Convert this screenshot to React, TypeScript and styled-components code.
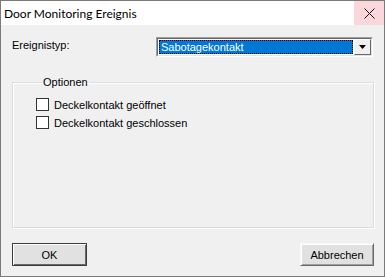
import React from "react";
import styled, { createGlobalStyle } from "styled-components";

const Global = createGlobalStyle`
  html, body { margin: 0; padding: 0; background: #ffffff; }
  * { box-sizing: border-box; }
`;

const Window = styled.div`
  width: 385px;
  height: 277px;
  border: 1px solid #7a7a7a;
  display: flex;
  flex-direction: column;
  background: #f0f0f0;
  font-family: "Liberation Sans", Arial, sans-serif;
  font-size: 11px;
  color: #000;
`;

const TitleBar = styled.div`
  height: 24px;
  background: #ffffff;
  display: flex;
  align-items: stretch;
`;

const Title = styled.div`
  flex: 1;
  padding-left: 3px;
  display: flex;
  align-items: center;
  font-family: Lato, "Noto Sans", sans-serif;
  font-size: 12px;
  color: #000;
`;

const CloseButton = styled.div`
  width: 30px;
  background: #fad7da;
  display: flex;
  align-items: center;
  justify-content: center;
`;

const Client = styled.div`
  flex: 1;
  display: flex;
  flex-direction: column;
  padding: 12px 10px 0 11px;
`;

const FieldRow = styled.div`
  display: flex;
  align-items: flex-start;
  height: 20px;
`;

const FieldLabel = styled.div`
  width: 144px;
  padding-top: 2px;
  line-height: 13px;
`;

const Combo = styled.div`
  width: 217px;
  height: 20px;
  display: flex;
  border-top: 1px solid #a0a0a0;
  border-left: 1px solid #a0a0a0;
  border-right: 1px solid #ffffff;
  border-bottom: 1px solid #ffffff;
`;

const ComboInner = styled.div`
  flex: 1;
  display: flex;
  background: #ffffff;
  border-top: 1px solid #696969;
  border-left: 1px solid #696969;
  border-right: 1px solid #e3e3e3;
  border-bottom: 1px solid #e3e3e3;
  padding: 1px;
`;

const ComboValue = styled.div`
  flex: 1;
  background: #0078d7;
  color: #ffffff;
  outline: 1px dotted #000;
  outline-offset: -1px;
  border: 1px dotted #ff9d2e;
  padding-left: 1px;
  line-height: 12px;
`;

const DropButton = styled.div`
  width: 17px;
  display: flex;
  align-items: center;
  justify-content: center;
  background: #f0f0f0;
  border-top: 1px solid #ffffff;
  border-left: 1px solid #ffffff;
  border-right: 1px solid #696969;
  border-bottom: 1px solid #696969;
  margin: -1px -1px -1px 1px;
`;

const Group = styled.fieldset`
  margin: 19px 0 0 0;
  padding: 9px 0 0 23px;
  height: 152px;
  border: 1px solid #dcdcdc;
  box-shadow: inset 1px 1px 0 #ffffff, 1px 1px 0 #ffffff;
  display: flex;
  flex-direction: column;
  gap: 5px;
`;

const Legend = styled.legend`
  margin-left: 6px;
  padding: 0 1px;
  line-height: 13px;
`;

const CheckRow = styled.label`
  display: flex;
  align-items: center;
  height: 13px;
  gap: 5px;
`;

const CheckBox = styled.span`
  width: 13px;
  height: 13px;
  background: #ffffff;
  border: 1px solid #333333;
`;

const ButtonRow = styled.div`
  margin-top: 15px;
  display: flex;
  justify-content: space-between;
`;

const Button = styled.div<{ $default?: boolean; $w: number }>`
  width: ${(p) => p.$w}px;
  height: 23px;
  display: flex;
  align-items: center;
  justify-content: center;
  background: #e1e1e1;
  border: 1px solid ${(p) => (p.$default ? "#3c3c3c" : "#adadad")};
  box-shadow: ${(p) =>
    p.$default
      ? "inset 1px 1px 0 #ffffff, inset -1px -1px 0 #696969"
      : "inset 1px 1px 0 #ffffff, inset -1px -1px 0 #a0a0a0"};
  border-color: ${(p) => (p.$default ? "#3c3c3c" : "#f8f8f8 #696969 #696969 #f8f8f8")};
`;

export default function App() {
  return (
    <>
      <Global />
      <Window>
        <TitleBar>
          <Title>Door Monitoring Ereignis</Title>
          <CloseButton>
            <svg width="11" height="11" viewBox="0 0 11 11">
              <path d="M0.5 0.5 L10.5 10.5 M10.5 0.5 L0.5 10.5" stroke="#111" strokeWidth="1" fill="none" />
            </svg>
          </CloseButton>
        </TitleBar>
        <Client>
          <FieldRow>
            <FieldLabel>Ereignistyp:</FieldLabel>
            <Combo>
              <ComboInner>
                <ComboValue>Sabotagekontakt</ComboValue>
                <DropButton>
                  <svg width="7" height="4" viewBox="0 0 7 4">
                    <path d="M0 0 H7 L3.5 4 Z" fill="#000" />
                  </svg>
                </DropButton>
              </ComboInner>
            </Combo>
          </FieldRow>
          <Group>
            <Legend>Optionen</Legend>
            <CheckRow>
              <CheckBox />
              Deckelkontakt geöffnet
            </CheckRow>
            <CheckRow>
              <CheckBox />
              Deckelkontakt geschlossen
            </CheckRow>
          </Group>
          <ButtonRow>
            <Button $default $w={75}>OK</Button>
            <Button $w={74}>Abbrechen</Button>
          </ButtonRow>
        </Client>
      </Window>
    </>
  );
}
